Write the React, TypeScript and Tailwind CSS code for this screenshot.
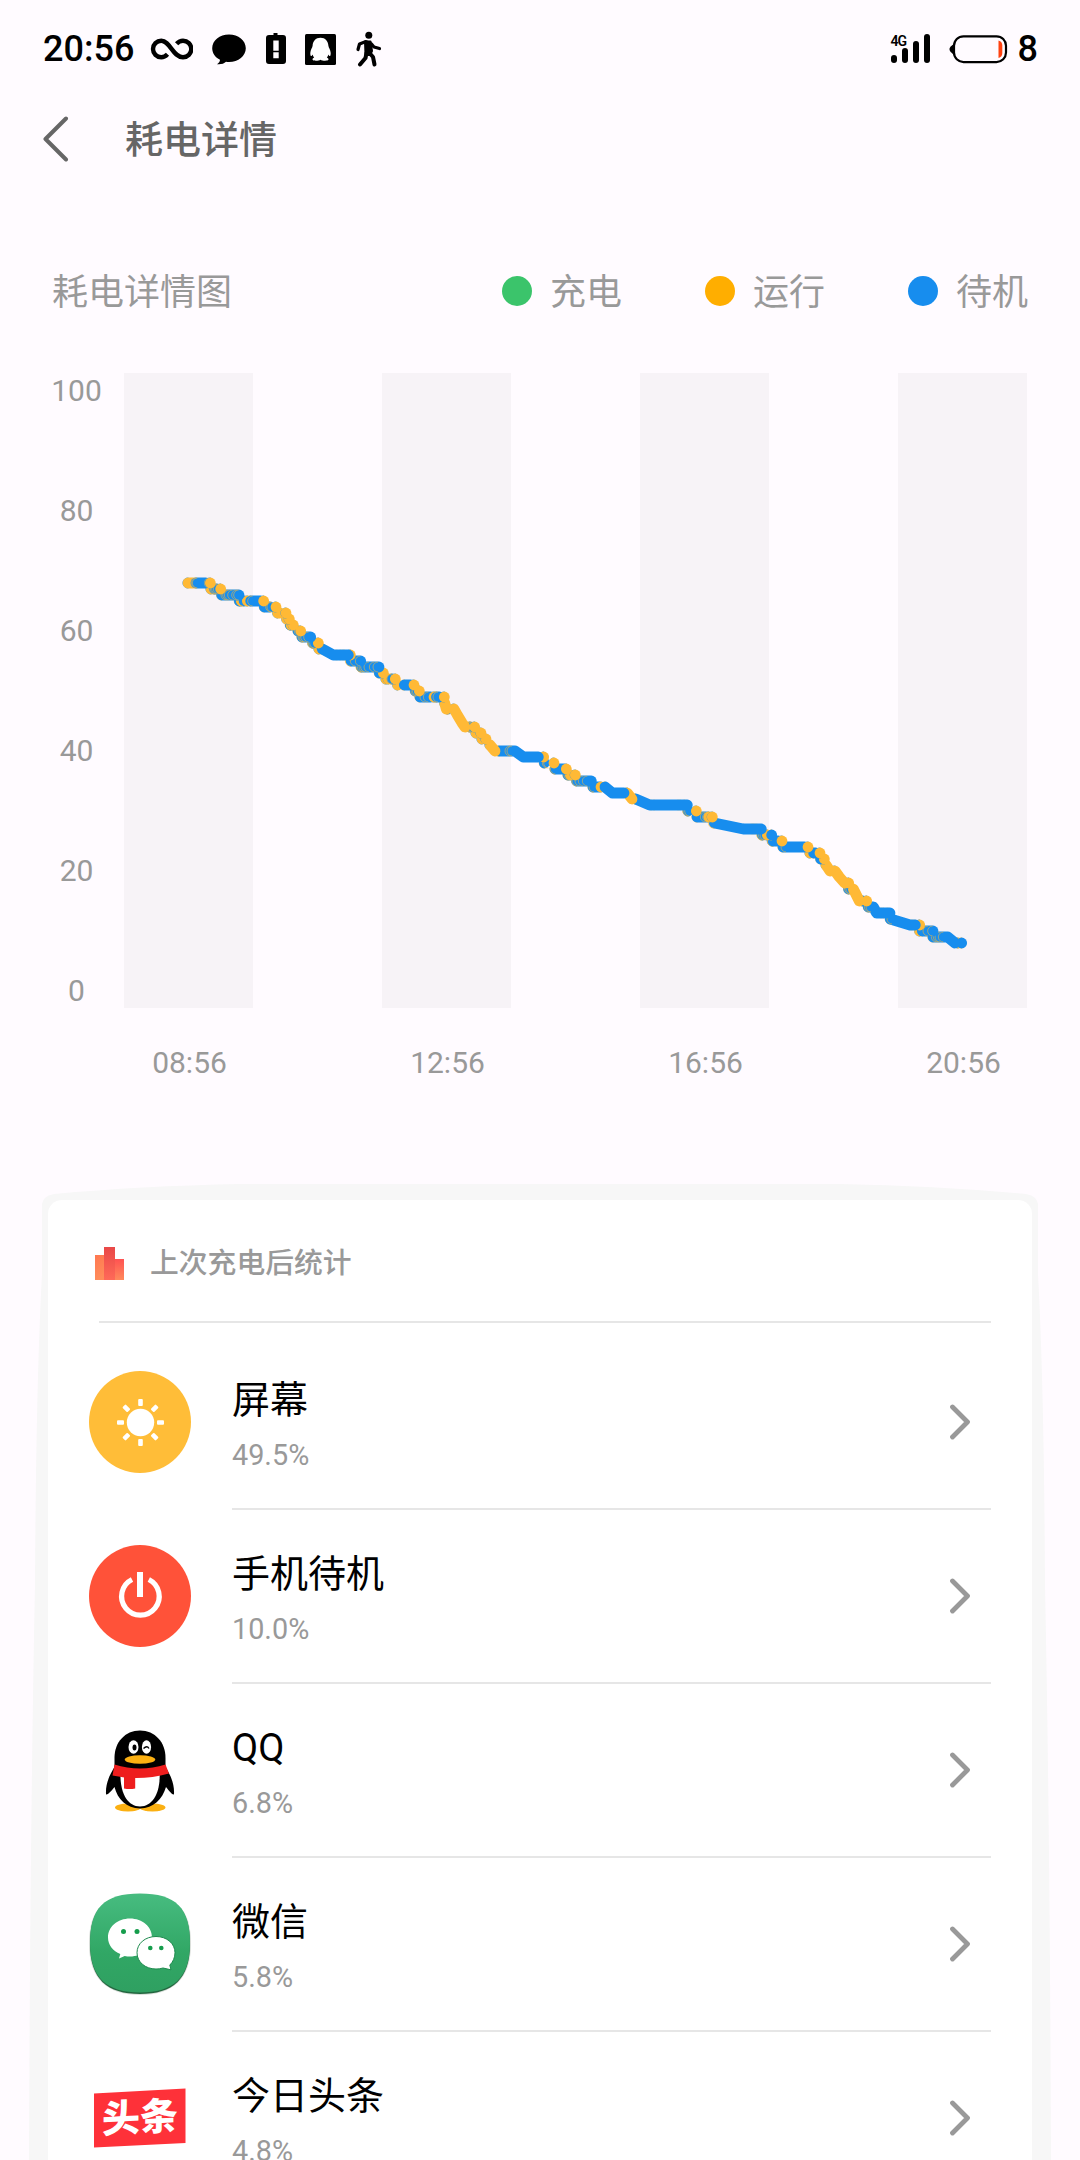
import React from "react";

type State = "run" | "idle";
type Run = { state: State; pts: [number, number][]; ring?: boolean };

const COLORS: Record<State, string> = { run: "#ffb935", idle: "#178dee" };

const Y = (...pts: [number, number][]): Run => ({ state: "run", pts });
const B = (...pts: [number, number][]): Run => ({ state: "idle", pts });
/** Brief wake-ups: hairline marks at the given ticks of one level. */
const R = (level: number, ...ticks: number[]): Run => ({
  state: "run",
  ring: true,
  pts: ticks.map((t) => [t, level] as [number, number]),
});

/** Points are [tick, battery level]; three ticks make one pixel. */
const RUNS: Run[] = [
  Y([54, 68], [70, 68]), B([78, 68], [107, 68]), R(68, 79, 82, 118), Y([121, 68]),
  Y([123, 67]), B([133, 67], [140, 67]), R(67, 132, 136, 140, 145), Y([152, 67]),
  B([155, 66], [207, 66]), R(66, 168, 173, 178, 188, 200, 206),
  B([208, 65]), Y([214, 65]), B([222, 65]), R(65, 219), Y([232, 65]), B([242, 65], [272, 65]), R(65, 238, 248), Y([281, 65]),
  B([283, 64], [300, 64]), R(64, 302, 306), Y([318, 64]),
  Y([323, 63], [330, 63]), Y([348, 63]), Y([350, 62]), Y([358, 62]),
  B([361, 61]), Y([363, 61]), Y([370, 61]),
  B([384, 60]), R(60, 388), Y([392, 60]),
  B([396, 59], [422, 59]), R(59, 399, 402, 407, 416),
  Y([428, 58]), B([430, 58]), R(58, 430, 434), Y([445, 58]),
  Y([447, 57]), B([457, 57], [490, 56], [535, 56]), R(56, 502, 513, 520, 524), Y([541, 56]),
  B([543, 55], [572, 55]), R(55, 541, 556, 571), B([574, 54], [627, 54]), R(54, 573, 577, 582, 587, 597, 613, 624),
  B([628, 53]), Y([640, 53]), Y([648, 52]), Y([655, 52]), B([666, 52]), R(52, 662, 666), Y([676, 52]),
  Y([683, 51]), B([703, 51], [722, 51]), Y([732, 51]),
  B([736, 50]), R(50, 738, 742), Y([748, 50]),
  B([750, 49], [782, 49]), R(49, 765, 775), Y([792, 49]), B([799, 49], [808, 49]), R(49, 797, 804), Y([823, 49]), Y([824, 48], [829, 47]),
  B([833, 47]), R(47, 837, 841), Y([852, 47], [862, 46], [876, 44.7], [885, 44]),
  B([900, 44]), R(44, 899, 903, 907), Y([914, 44]), Y([918, 43]), Y([933, 43]), Y([936, 42]), Y([948, 42]), Y([960, 41], [975, 40]),
  B([987, 40], [1035, 40], [1060, 39], [1105, 39]), R(40, 1020, 1026), Y([1121, 39]),
  B([1123, 38]), R(38, 1132, 1136), Y([1152, 38]),
  B([1155, 37], [1182, 37]), R(37, 1156), Y([1189, 37]), B([1194, 36]), Y([1201, 36]), R(36, 1197), Y([1216, 36]),
  B([1220, 35], [1264, 35]), R(35, 1221, 1230, 1240, 1252),
  B([1269, 34], [1286, 34]), R(34, 1272), Y([1293, 34]), B([1305, 34], [1327, 33], [1362, 33]), Y([1372, 33], [1386, 32]),
  B([1397, 32], [1439, 31], [1552, 31]), R(31, 1445, 1454, 1526, 1532, 1545),
  B([1554, 30]), R(30, 1554, 1559), Y([1579, 30]),
  B([1581, 29], [1608, 29]), R(29, 1606, 1613), Y([1616, 29]), R(29, 1621), Y([1627, 29]),
  B([1633, 28], [1720, 27], [1774, 27]), R(28, 1630), R(27, 1747, 1751, 1756, 1762),
  B([1777, 26]), R(26, 1775, 1780, 1785), Y([1792, 26]), B([1805, 26]),
  Y([1807, 25]), B([1809, 25], [1825, 25]), Y([1836, 25]),
  B([1839, 24], [1904, 24]), R(24, 1848), Y([1914, 24]),
  Y([1920, 23]), B([1931, 23], [1937, 23]), Y([1950, 23]), B([1952, 22]), Y([1963, 22]),
  Y([1968, 21], [1980, 20]), Y([1995, 20], [2008, 19], [2024, 18]), R(18, 2025), Y([2036, 18]),
  B([2036, 17]), R(17, 2039, 2043), Y([2050, 17], [2068, 15]), B([2078, 15]), Y([2090, 15]),
  B([2095, 14], [2110, 14], [2120, 13], [2160, 13]), R(14, 2098, 2103), R(13, 2135, 2142, 2155),
  B([2161, 12], [2220, 11], [2236, 11]), R(12, 2166), R(11, 2225, 2230, 2237), Y([2249, 11]),
  Y([2249, 10]), B([2257, 10], [2289, 10]), R(10, 2274, 2288), B([2289, 9], [2333, 9], [2355, 8]), R(9, 2299, 2305, 2310, 2320), Y([2364, 8]), B([2375, 8]),
];

const px = (t: number) => +(170 - 124 + t / 3).toFixed(2);
const py = (level: number) => +(991 - 373 - level * 6).toFixed(2);

/** Higher levels are painted last, each level from left to right. */
const ORDERED = RUNS.map((r, i) => ({ r, i })).sort((a, b) => a.r.pts[0][1] - b.r.pts[0][1] || a.i - b.i);

function BatteryLine() {
  return (
    <svg className="absolute inset-0" width="903" height="635" viewBox="0 0 903 635" fill="none">
      {ORDERED.map(({ r, i }) =>
        r.ring ? (
          <g key={i} stroke={COLORS.run} strokeWidth="0.55">
            {r.pts.map(([t, l]) => (
              <path key={t} d={`M${px(t)} ${py(l) - 5} a5 5 0 0 0 0 10`} />
            ))}
          </g>
        ) : (
          <g key={i} strokeLinecap="round" strokeLinejoin="round">
            <path
              d={`M${px(r.pts[0][0])} ${py(r.pts[0][1]) - 5.2} a5.2 5.2 0 0 0 0 10.4`}
              stroke={COLORS[r.state === "run" ? "idle" : "run"]}
              strokeWidth="0.7"
            />
            <path
              d={"M" + [...r.pts, r.pts[r.pts.length - 1]].map(([t, l]) => `${px(t)} ${py(l)}`).join("L")}
              stroke={COLORS[r.state]}
              strokeWidth="10.8"
            />
          </g>
        )
      )}
    </svg>
  );
}

function StatusBar() {
  return (
    <header className="flex h-[98px] shrink-0 items-center pr-[42px] pl-[43px] text-black">
      <span className="w-[107px] text-[36px] leading-none font-medium">20:56</span>
      <svg width="43" height="24" viewBox="0 0 43 24" fill="none" stroke="black" strokeWidth="4.4">
        <path d="M17.500 17.200C15.600 19.200 13.600 20.300 11.300 20.300A8.300 8.300 0 0 1 11.300 3.700C20 3.700 23 20.300 33 20.300A8.300 8.300 0 0 0 33 3.700C30.400 3.700 28.400 4.800 26.600 6.800" />
      </svg>
      <svg className="ml-[19px]" width="34" height="32" viewBox="0 0 34 32">
        <path d="M17 1.500C26.400 1.500 33.800 7.600 33.800 15.200S26.400 29 17 29c-1.100 0-2 0-3-.2C12 30.800 8.500 31.700 5 31.200c1.800-1.200 3-2.700 3-4.400C3.300 24.300.2 20.200.2 15.200.2 7.600 7.600 1.500 17 1.500Z" />
      </svg>
      <svg className="ml-5" width="20" height="32" viewBox="0 0 20 32">
        <path fillRule="evenodd" d="M7.500 0h4v2H17c2 0 3 1 3 3v23c0 2-1 3-3 3H3c-2 0-3-1-3-3V5c0-2 1-3 3-3h4.500ZM7.300 7.500v10.300h5.400V7.500Zm0 11.800v6h5.400v-6Z" />
      </svg>
      <svg className="ml-[19px]" width="31" height="31" viewBox="0 0 31 31">
        <rect width="31" height="31" rx="1.500" />
        <path
          fill="white"
          d="M15.500 3.800c4.800 0 7.600 3.500 7.900 8 .1 1.700 2.200 4.200 2.300 7.200 0 1.600-.2 2.800-.7 3-.6.200-1.300-1-1.700-1.600-.2 1.400-.8 2.400-1.500 3.100 1.200.6 1.900 1.200 1.700 2.100-.3 1.600-6.200 1.500-8 .1-1.800 1.400-7.700 1.500-8-.1-.2-.9.500-1.500 1.700-2.100-.7-.7-1.300-1.700-1.500-3.100-.4.600-1.100 1.800-1.700 1.600-.5-.2-.7-1.400-.7-3 .1-3 2.200-5.500 2.300-7.200.3-4.500 3.100-8 7.900-8Z"
        />
      </svg>
      <svg className="ml-5" width="26" height="36" viewBox="0 0 26 36" fill="none" stroke="black" strokeLinecap="round" strokeLinejoin="round">
        <circle cx="12.800" cy="4.200" r="3.500" fill="black" stroke="none" />
        <path d="M2 18.500 3.500 13 10 10.600 15.500 13 18 16 23.500 17.500" strokeWidth="3.200" />
        <path d="M9 10.500H14.500L16 20 14 24H9.500Z" fill="black" strokeWidth="2" />
        <path d="M10.500 22 9.500 27 4 33.500" strokeWidth="4" />
        <path d="M13.500 22 17 26 18.500 33.500" strokeWidth="4" />
      </svg>

      <div className="ml-auto flex items-center">
        <div className="relative h-[30px] w-[40px]">
          <span className="absolute top-0 left-0 text-[14px] leading-[14px] font-semibold tracking-[-1px]">4G</span>
          <div className="flex h-[29px] items-end gap-[5px]">
            <i className="h-[8px] w-[6px] rounded-full bg-black" />
            <i className="h-[15px] w-[6px] rounded-full bg-black" />
            <i className="h-[22px] w-[6px] rounded-full bg-black" />
            <i className="h-[29px] w-[6px] rounded-full bg-black" />
          </div>
        </div>
        <svg className="ml-[18px]" width="59" height="30" viewBox="0 0 59 30">
          <path d="M5 9.500C4 11 .5 12.500.5 15.200S4 19.500 5 21Z" />
          <rect x="5" y="2.300" width="52" height="25.800" rx="9.500" fill="none" stroke="black" strokeWidth="2.200" />
          <path d="M49.500 6.500c2.600.8 3.800 2.500 3.800 5v7.500c0 2.500-1.200 4.200-3.800 5Z" fill="#ff4210" />
        </svg>
        <span className="ml-[10px] text-[36px] leading-none font-medium">8</span>
      </div>
    </header>
  );
}

function Legend({ dot, label }: { dot: string; label: string }) {
  return (
    <li className="flex items-center">
      <i className={`size-[30px] rounded-full ${dot}`} />
      <span className="ml-[18px] w-[73px] pt-[3px]">{label}</span>
    </li>
  );
}

const ScreenIcon = () => (
  <svg width="102" height="102" viewBox="0 0 102 102">
    <circle cx="51" cy="51" r="51" fill="#ffbd38" />
    <circle cx="51.500" cy="51.500" r="13.700" fill="white" />
    {[0, 45, 90, 135, 180, 225, 270, 315].map((a) => (
      <rect key={a} x="49.200" y="28" width="4.600" height="7" rx="1" fill="white" transform={`rotate(${a} 51.5 51.5)`} />
    ))}
  </svg>
);

const PowerIcon = () => (
  <svg width="102" height="102" viewBox="0 0 102 102">
    <circle cx="51" cy="51" r="51" fill="#ff5239" />
    <path d="M43 34.500a18.800 18.800 0 1 0 16.800 0" fill="none" stroke="white" strokeWidth="5.200" />
    <rect x="48" y="27" width="6" height="25" fill="white" />
  </svg>
);

const QQIcon = () => (
  <svg width="102" height="102" viewBox="0 0 102 102">
    <ellipse cx="39" cy="88.500" rx="13" ry="4" fill="#fbb012" />
    <ellipse cx="63.500" cy="88.500" rx="13" ry="4" fill="#fbb012" />
    <path d="M26 47C20 57 16.500 65 17 75c.6 2 4.500-2 8.500-7 3 12 12 21.500 25.500 21.500S73.500 80 77 68c4 5 7.300 9 8 7 .5-10-3-18-9-28Z" />
    <path d="M51 11.500c15 0 25.500 12 25.500 27V52h-51V38.500c0-15 10.500-27 25.500-27Z" />
    <path d="M31.500 52h39c1.500 20-6 35.500-19.500 35.500S30.500 72 31.500 52Z" fill="white" />
    <path d="M25.500 45.500Q51 53.500 76.500 45.500L80 54.500Q51 62.500 23.500 56.500Z" fill="#ee1d1d" />
    <path d="M35 57h11.200v12.500q-5.600 1-11.200 0Z" fill="#ee1d1d" />
    <ellipse cx="44.500" cy="28" rx="5" ry="6.700" fill="white" />
    <ellipse cx="57.500" cy="28" rx="4.600" ry="6.700" fill="white" />
    <ellipse cx="45.500" cy="28.500" rx="2" ry="3" />
    <path d="M54.500 29.500q3.500-3.500 5.500 0" fill="none" stroke="black" strokeWidth="1.300" />
    <ellipse cx="51" cy="40.500" rx="15.300" ry="4.300" fill="#fbb012" />
  </svg>
);

const WeChatIcon = () => (
  <svg width="102" height="102" viewBox="0 0 102 102">
    <defs>
      <linearGradient id="wx" x1="0" y1="0" x2="0" y2="1">
        <stop offset="0" stopColor="#47bc80" />
        <stop offset="0.6" stopColor="#31a765" />
        <stop offset="1" stopColor="#2fa061" />
      </linearGradient>
    </defs>
    <path d="M51 2C88 2 102 16 102 51S84 102 51 102 0 86 0 51 14 2 51 2Z" fill="#d9ded9" />
    <path d="M51 1.500C87 1.500 101 16 101 51S84 101 51 101 1 86 1 51 15 1.500 51 1.500Z" fill="#23663f" />
    <path d="M51 .5C87 .5 101 15 101 50S84 99.500 51 99.500 1 85 1 50 15 .5 51 .5Z" fill="url(#wx)" />
    <path d="M41 25.500c12.500 0 22 8.300 22 19s-9.500 19-22 19c-2 0-3.500-.2-5.300-.6L30 65.500l1.300-4.500C24 58 19 52 19 44.500c0-10.700 9.500-19 22-19Z" fill="white" />
    <path d="M67 43.500c-10.800 0-19 7-19 16.200S56.200 76 67 76c2.600 0 5-.3 7-1l8 1.800-1.200-4.700C84 69 86 64.500 86 59.700c0-9.200-8.200-16.200-19-16.200Z" fill="white" stroke="#1d8a4d" strokeWidth="1" />
    <g fill="#159d4c">
      <circle cx="34.500" cy="38.500" r="2.500" />
      <circle cx="48" cy="38.500" r="2.500" />
      <circle cx="61.300" cy="55" r="2.300" />
      <circle cx="72.300" cy="55" r="2.300" />
    </g>
  </svg>
);

const ToutiaoIcon = () => (
  <span className="relative flex size-[102px] items-center justify-center">
    <svg className="absolute inset-0" width="102" height="102" viewBox="0 0 102 102">
      <path d="M5 26.500 96.500 21.500V76L5 80.500Z" fill="#fe3139" />
    </svg>
    <span className="relative -skew-y-3 text-[38px] leading-none font-black text-white">头条</span>
  </span>
);

const ITEMS = [
  { name: "屏幕", value: "49.5%", icon: <ScreenIcon /> },
  { name: "手机待机", value: "10.0%", icon: <PowerIcon /> },
  { name: "QQ", value: "6.8%", icon: <QQIcon /> },
  { name: "微信", value: "5.8%", icon: <WeChatIcon /> },
  { name: "今日头条", value: "4.8%", icon: <ToutiaoIcon /> },
];

export default function App() {
  return (
    <div className="flex h-[2160px] w-[1080px] flex-col overflow-hidden bg-[#fffbff] font-[Roboto,'Noto_Sans_CJK_SC',sans-serif]">
      <StatusBar />

      <div className="flex h-[82px] shrink-0 items-center pl-[42px]">
        <svg width="28" height="46" viewBox="0 0 28 46" fill="none" stroke="#666" strokeWidth="4" strokeLinecap="round" strokeLinejoin="round">
          <path d="M24 2.500 3.500 23 24 43.500" />
        </svg>
        <h1 className="ml-[55px] pt-[2px] text-[38px] leading-none font-medium text-[#666]">耗电详情</h1>
      </div>

      <section className="shrink-0 pt-[83px] text-[#999]">
        <div className="flex h-[56px] items-center justify-between pr-[51px] pl-[52px] text-[36px] leading-none">
          <h2 className="pt-[3px]">耗电详情图</h2>
          <ul className="flex gap-[82px]">
            <Legend dot="bg-[#3bc46b]" label="充电" />
            <Legend dot="bg-[#ffae00]" label="运行" />
            <Legend dot="bg-[#178dee]" label="待机" />
          </ul>
        </div>

        <div className="mt-[54px] flex pl-[46px] text-[30px]">
          <div className="flex h-[636px] w-[78px] flex-col justify-between pr-[17px] text-center leading-[36px]">
            {[100, 80, 60, 40, 20, 0].map((n) => (
              <span key={n}>{n}</span>
            ))}
          </div>
          <div className="relative flex h-[635px] w-[903px]">
            {[0, 1, 2, 3, 4, 5, 6].map((n) => (
              <i key={n} className="h-full w-[129px] odd:bg-[#f7f3f7]" />
            ))}
            <BatteryLine />
          </div>
        </div>
        <div className="mt-[36px] ml-[125px] flex w-[903px] justify-between text-center text-[30px] leading-[36px]">
          {["08:56", "12:56", "16:56", "20:56"].map((t) => (
            <span key={t} className="w-[129px]">{t}</span>
          ))}
        </div>
      </section>

      <section className="relative mt-[119px] shrink-0 px-[48px]">
        <svg className="absolute -top-[16px] left-0" width="1080" height="980" viewBox="0 0 1080 980" fill="#f7f7f7">
          <path d="M240 0H840Q940 2 1026 10Q1038 12 1038 22L1038 90Q1044 200 1045 400Q1050 650 1051 980H29Q30 650 35 400Q36 200 42 90V22Q42 12 54 10Q140 2 240 0Z" />
        </svg>
        <div className="relative h-[960px] rounded-t-[14px] bg-white pt-px pr-[41px]">
          <div className="ml-[51px] flex h-[122px] items-center border-b-2 border-[#e6e6e6] pt-[4px]">
            <svg className="-ml-1" width="29" height="33" viewBox="0 0 29 33">
              <defs>
                <linearGradient id="side" x1="0" y1="0" x2="0.3" y2="1">
                  <stop offset="0" stopColor="#ff7750" />
                  <stop offset="1" stopColor="#ff8d5b" />
                </linearGradient>
                <linearGradient id="mid" x1="0" y1="0" x2="0" y2="1">
                  <stop offset="0" stopColor="#e94848" />
                  <stop offset="1" stopColor="#ff6a58" />
                </linearGradient>
                <linearGradient id="end" x1="0" y1="0" x2="0" y2="1">
                  <stop offset="0" stopColor="#ff5252" />
                  <stop offset="1" stopColor="#ff8a5c" />
                </linearGradient>
              </defs>
              <rect y="8" width="10" height="25" fill="url(#side)" />
              <rect x="9" width="11" height="33" fill="url(#mid)" />
              <rect x="20" y="12" width="9" height="21" fill="url(#end)" />
            </svg>
            <h3 className="ml-[26px] text-[28.800px] leading-none font-medium text-[#999]">上次充电后统计</h3>
          </div>
          <ul className="pt-[13px]">
            {ITEMS.map((item) => (
              <li key={item.name} className="flex h-[174px] items-stretch pl-[41px]">
                <div className="flex h-[172px] w-[143px] items-center">{item.icon}</div>
                <div className="flex flex-1 items-center justify-between border-b-2 border-[#e6e6e6] pr-[20px]">
                  <div className="pt-[3px]">
                    <p className="text-[38px] leading-[48px] text-black">{item.name}</p>
                    <p className="mt-[14px] text-[28.800px] leading-[34px] text-[#999]">{item.value}</p>
                  </div>
                  <svg width="22" height="36" viewBox="0 0 22 36" fill="none" stroke="#999" strokeWidth="4.800" strokeLinecap="round" strokeLinejoin="round">
                    <path d="M3.500 3 18.500 18 3.500 33" />
                  </svg>
                </div>
              </li>
            ))}
          </ul>
        </div>
      </section>
    </div>
  );
}
